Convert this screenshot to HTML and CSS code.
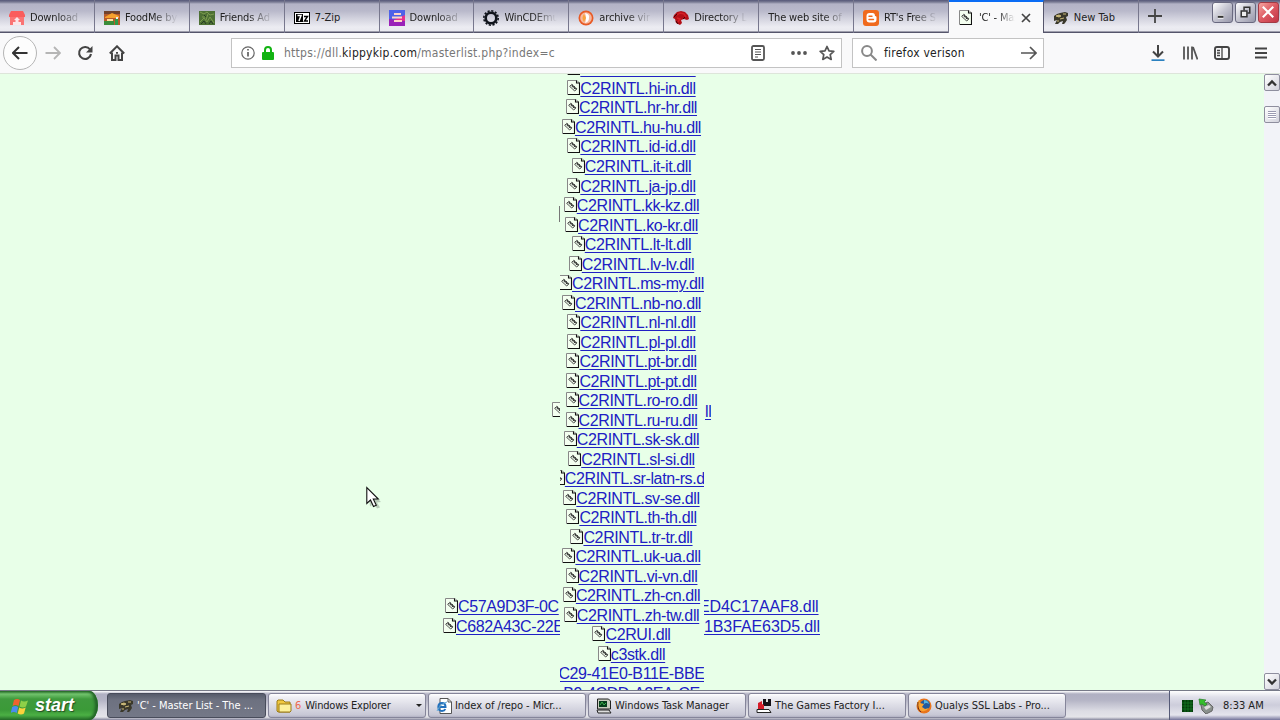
FILE: index.html
```
<!DOCTYPE html>
<html lang="en">

<head>
    <meta charset="UTF-8">
    <meta name="viewport" content="width=device-width, initial-scale=1.0">
    <title>'C' - Master List</title>
    <link rel="stylesheet" href="styles.css">
</head>

<body>
    <!-- shared icons -->
    <svg class="defs">
        <symbol id="file" viewBox="0 0 13 15">
            <path d="M.5.500h9.500l2.500 2.500v11.500H.5z" fill="#f4fff0" stroke="#888" stroke-width="1" />
            <path d="M9.500.500v2.500h3v11.500H1" fill="none" stroke="#111" stroke-width="1.100" />
            <path d="M2.800 6.500l2-2.200 5 4.400-2 2.400-5-4.600M4.500 5.800l4 3.600" fill="none" stroke="#222" stroke-width="1" stroke-dasharray="2 .6" />
            <path d="M4.500 4.500l5 5" stroke="#222" stroke-width=".8" />
        </symbol>
        <symbol id="turtle" viewBox="0 0 16 16">
            <path d="M1 6l3-2 3-1 5-1 3 1v3l-2 1 1 3-2 3-1 1H9l1-3-3 1-2 2H2l2-4-3 1z" fill="#3a382a" />
            <path d="M3 6l3-1 2 1-2 1zM10 4h3M7 9l4-1M4 11h2" fill="#d8c88a" stroke="#c9b878" stroke-width="1" />
        </symbol>
    </svg>

    <div class="tabs">
        <div class="tab">
            <svg class="fav" viewBox="0 0 16 16"><path d="M2 1h12l2 4v2H0V5z" fill="#fa5c5c" /><path d="M1 7h14v8H1z" fill="#fa7474" /><path d="M8 7l3 3H9.500v2h-3v-2H5zM4 15v-3h8v3" fill="#fbe5e8" /></svg>
            <span class="tab-title">Download</span>
        </div>
        <div class="tab">
            <svg class="fav" viewBox="0 0 16 16"><path d="M0 1h16v14H0z" fill="#b75b2b" /><path d="M0 1h16v3H0z" fill="#70422e" /><path d="M1 7l7-4 7 3v2H1z" fill="#f6a12d" /><path d="M0 11h10v4H0z" fill="#3a8c3a" /><path d="M3 9h6v2H3z" fill="#ffe0a0" /><path d="M11 9h3v6h-3z" fill="#2c9b49" /><path d="M12 7h2v2h-2z" fill="#eee" /></svg>
            <span class="tab-title">FoodMe by</span>
        </div>
        <div class="tab">
            <svg class="fav" viewBox="0 0 16 16"><path d="M0 1h16v14H0z" fill="#4d7034" /><path d="M1 2l4 2 3-2 3 3 4-1M1 12l4-4 3 4 3-5 4 6M3 7h3M9 4l-2 6" fill="none" stroke="#7c9b4f" stroke-width="1" /><path d="M2 14l3-3 2 3M10 14l2-3 2 3M5 5l2 2" stroke="#263b25" fill="none" /></svg>
            <span class="tab-title">Friends Ad</span>
        </div>
        <div class="tab">
            <svg class="fav" viewBox="0 0 16 16"><path d="M0 2h16v12H0z" fill="#000" /><path d="M1 3h14v10H1z" fill="#fff" /><path d="M2 4h7v8H2z" fill="#000" /><path d="M3.500 5.500h3.500l-2 5.500" fill="none" stroke="#fff" stroke-width="1.500" /><path d="M10 6.500h3.500l-3 4.500H14" fill="none" stroke="#000" stroke-width="1.400" /></svg>
            <span class="tab-title zip">7-Zip</span>
        </div>
        <div class="tab">
            <svg class="fav" viewBox="0 0 16 16"><rect width="16" height="16" y="0" rx="1" fill="#e8308c" /><path d="M0 0h16v5L0 12z" fill="#4e62e8" /><path d="M0 9l16 2v5H0z" fill="#9a21b8" /><path d="M5 4h7M3 7.500h10M5 11h8" stroke="#ffd5c9" stroke-width="1.800" /></svg>
            <span class="tab-title">Download</span>
        </div>
        <div class="tab">
            <svg class="fav" viewBox="0 0 16 16"><circle cx="8" cy="8" r="5.300" fill="none" stroke="#10141c" stroke-width="2.600" /><circle cx="8" cy="8" r="7.200" fill="none" stroke="#10141c" stroke-width="1.600" stroke-dasharray="2.200 1.570" /></svg>
            <span class="tab-title">WinCDEmu</span>
        </div>
        <div class="tab">
            <svg class="fav" viewBox="0 0 16 16"><circle cx="8" cy="8" r="7.500" fill="#e85a25" /><circle cx="8" cy="8" r="5.800" fill="#f6b9a0" /><path d="M7 3q5 1 4 5 0 4-4 5 2-5 0-10z" fill="#fff" /><path d="M6 4q-3 4 0 8l2-4z" fill="#f9a33d" /></svg>
            <span class="tab-title">archive vir</span>
        </div>
        <div class="tab">
            <svg class="fav" viewBox="0 0 16 16"><path d="M1 5l3-3 4-1 4 1 3 3 1 4-2 1-3-1-3 1 1 3-2 2-4-2-1-4-2-1z" fill="#b30f16" /><path d="M4 5l3-2 4 1 2 3M4 8l3 1-2 3" fill="none" stroke="#d51f25" stroke-width="1.500" /><path d="M1 7l3-3M3 11l2 3M10 9l2-2" stroke="#43070a" fill="none" /></svg>
            <span class="tab-title">Directory L</span>
        </div>
        <div class="tab bare">
            <span class="tab-title">The web site of</span>
        </div>
        <div class="tab">
            <svg class="fav" viewBox="0 0 16 16"><rect width="16" height="16" rx="3" fill="#f06a1d" /><path d="M6.500 3h3q2.500 0 2.500 3 1.500 0 1.500 1.200V9.500q0 3-3 3h-4q-3 0-3-3V6q0-3 3-3z" fill="#fff" /><path d="M6 6.200h3M6 9.500h4.500" stroke="#f06a1d" stroke-width="1.400" stroke-linecap="round" /></svg>
            <span class="tab-title">RT's Free S</span>
        </div>
        <div class="tab active">
            <svg class="fav page"><use href="#file" /></svg>
            <span class="tab-title">'C' - Mas</span>
            <svg class="close" viewBox="0 0 10 10"><path d="M1 1l8 8M9 1L1 9" stroke="#444" stroke-width="1.700" /></svg>
        </div>
        <div class="tab">
            <svg class="fav"><use href="#turtle" /></svg>
            <span class="tab-title new-tab">New Tab</span>
        </div>
        <div class="add"><svg viewBox="0 0 14 14"><path d="M7 0v14M0 7h14" stroke="#444" stroke-width="1.800" /></svg></div>
        <div class="window-btns">
            <button class="win"><svg viewBox="0 0 20 20"><path d="M5 14.500h6" stroke="#fff" stroke-width="4" /><path d="M5 14.500h6" stroke="#333" stroke-width="2.200" /></svg></button>
            <button class="win"><svg viewBox="0 0 20 20"><path d="M8.500 8V4.500h6v6H12" fill="none" stroke="#333" stroke-width="1.600" /><path d="M5.500 8.500h6v6h-6z" fill="#eee" stroke="#333" stroke-width="1.600" /></svg></button>
            <button class="win red"><svg viewBox="0 0 20 20"><path d="M4 4l11 11M15 4L4 15" stroke="#fff" stroke-width="2.200" /></svg></button>
        </div>
    </div>

    <div class="toolbar">
        <div class="back"><svg viewBox="0 0 16 16"><path d="M15.500 8H1.500M7 2L1 8l6 6" fill="none" stroke="#333" stroke-width="2" /></svg></div>
        <svg class="nav" viewBox="0 0 16 16"><path d="M.5 8h14M9 2l6 6-6 6" fill="none" stroke="#b5b5b5" stroke-width="1.800" /></svg>
        <svg class="nav" viewBox="0 0 16 16"><path d="M13 4.500A6 6 0 1 0 14 9" fill="none" stroke="#444" stroke-width="2.100" /><path d="M15.500 1v6.500H9z" fill="#444" /></svg>
        <svg class="nav" viewBox="0 0 16 16"><path d="M.8 8.500L8 1.300l7.200 7.200" fill="none" stroke="#444" stroke-width="2" /><path d="M3 7.500V15h3.500v-4.500h3V15H13V7.500" fill="none" stroke="#444" stroke-width="2" /><path d="M7 7h2v1.800H7z" fill="#444" /></svg>
        <div class="url-bar">
            <svg class="info" viewBox="0 0 14 14"><circle cx="7" cy="7" r="6.200" fill="none" stroke="#666" stroke-width="1.200" /><path d="M7 6v4.500M7 3v1.600" stroke="#555" stroke-width="1.600" /></svg>
            <svg class="lock" viewBox="0 0 12 14"><path d="M3 7V4a3 3 0 0 1 6 0v3" fill="none" stroke="#12b312" stroke-width="2" /><rect y="6" width="12" height="8" rx="1" fill="#12b312" /></svg>
            <span class="url">https://dll.<b>kippykip.com</b>/masterlist.php?index=c</span>
            <svg class="reader" viewBox="0 0 14 16"><rect x="1" y="1" width="12" height="14" rx="1.500" fill="none" stroke="#555" stroke-width="1.800" /><path d="M4 4.500h6M4 7h6M4 9.500h6M4 12h3" stroke="#555" /></svg>
            <svg class="dots" viewBox="0 0 16 4"><circle cx="2" cy="2" r="1.900" fill="#555" /><circle cx="8" cy="2" r="1.900" fill="#555" /><circle cx="14" cy="2" r="1.900" fill="#555" /></svg>
            <svg class="star" viewBox="0 0 16 16"><path d="M8 1.500l2 4.400 4.800.5-3.600 3.200 1 4.800L8 12l-4.200 2.400 1-4.800L1.200 6.400 6 5.900z" fill="none" stroke="#555" stroke-width="1.700" stroke-linejoin="round" /></svg>
        </div>
        <div class="search">
            <svg class="glass" viewBox="0 0 16 16"><circle cx="6" cy="6" r="4.900" fill="none" stroke="#888" stroke-width="2" /><path d="M9.500 9.500l6 6" stroke="#888" stroke-width="2" /></svg>
            <span>firefox verison</span>
            <svg class="go" viewBox="0 0 16 14"><path d="M0 7h15M9 1l6 6-6 6" fill="none" stroke="#555" stroke-width="1.700" /></svg>
        </div>
        <div class="tools">
            <svg viewBox="0 0 16 16"><path d="M8 0v11M3 6.500l5 5 5-5" fill="none" stroke="#444" stroke-width="2" /><path d="M1.500 15.200h13" stroke="#2c82c0" stroke-width="1.800" /></svg>
            <svg viewBox="0 0 16 16"><path d="M2 1.500v13M6 1.500v13M10 1.500v13M11 2l4.500 12.500" fill="none" stroke="#555" stroke-width="1.800" /></svg>
            <svg viewBox="0 0 16 16"><rect x="1" y="2" width="14" height="12" rx="2" fill="none" stroke="#444" stroke-width="1.900" /><path d="M8 2v12M3 5.500h3M3 8h3M3 10.500h3" stroke="#444" stroke-width="1.300" /></svg>
            <svg class="menu" viewBox="0 0 14 14"><path d="M1 2.500h12M1 7h12M1 11.500h12" stroke="#444" stroke-width="1.900" /></svg>
        </div>
    </div>

    <div class="page-area">
        <div class="content">
            <!-- rows further down the list that only partly repainted -->
            <div class="stale sliver"></div>
            <div class="stale cut"><svg class="file"><use href="#file" /></svg></div>
            <a class="stale cut-end">ll</a>
            <div class="stale left-rows">
                <div><svg class="file"><use href="#file" /></svg><a>C57A9D3F-0C</a></div>
                <div class="wide"><svg class="file"><use href="#file" /></svg><a>C682A43C-22E</a></div>
            </div>
            <div class="stale right-rows">
                <div><a class="shift">ED4C17AAF8.dll</a></div>
                <div><a>1B3FAE63D5.dll</a></div>
            </div>

            <div class="list"></div>
        </div>
        <div class="scrollbar">
            <div class="sb-btn"><svg viewBox="0 0 10 8"><path d="M1 6.500l4-4 4 4" fill="none" stroke="#333" stroke-width="2.300" /></svg></div>
            <div class="thumb"></div>
            <div class="sb-btn down"><svg viewBox="0 0 10 8"><path d="M1 1.500l4 4 4-4" fill="none" stroke="#333" stroke-width="2.300" /></svg></div>
        </div>
        <svg class="cursor" viewBox="0 0 14 23"><path d="M2 3l13 13-4 .5 3 5-3 1-3-5-4 3z" fill="#0003" /><path d="M.8 1.500v16l3.700-3.500 3 6.500 2.800-1.200-3-6.300h5z" fill="#fff" stroke="#111" stroke-width="1.100" /></svg>
    </div>

    <div class="taskbar">
        <div class="start">
            <svg viewBox="0 0 18 18"><path d="M3 3q3-2 6 0L7.500 9q-3-2-6 0z" fill="#f0622d" /><path d="M10 3.500q3 2 7 0L15 9.500q-3 2-6.500 0z" fill="#8ed048" /><path d="M1.200 10q3-2 6 0L5.700 16q-3-2-6 0z" fill="#4a8df0" /><path d="M8.200 10.500q3 2 6.500 0L13 16.500q-3 2-6.300 0z" fill="#fbd23c" /></svg>
            <span>start</span>
        </div>
        <div class="task current"><svg><use href="#turtle" /></svg><span>'C' - Master List - The ...</span></div>
        <div class="task">
            <svg viewBox="0 0 16 16"><path d="M1 3l1-1h5l2 2h5v10H2L1 13z" fill="#f1c840" stroke="#9a7b18" /><path d="M3 6h12v7l-1 1H3z" fill="#fdf09a" stroke="#9a7b18" /></svg>
            <em>6</em><span class="grouped">Windows Explorer</span><i class="arrow"></i>
        </div>
        <div class="task">
            <svg viewBox="0 0 16 16"><path d="M4 .5h8l3.500 3.500v11.500H4z" fill="#fff" stroke="#555" /><path d="M12 .5V4h3.500" fill="none" stroke="#555" /><path d="M2.500 9h7q0-4-3.500-4t-3.700 4q.3 4 3.700 4 2.500 0 3.300-2" fill="none" stroke="#2371bd" stroke-width="2" /><path d="M1 13Q4 6 11 4" fill="none" stroke="#63acd9" /></svg>
            <span>Index of /repo - Micr...</span>
        </div>
        <div class="task">
            <svg viewBox="0 0 16 16"><path d="M1.500 1h11l2 2v8h-13z" fill="#c9cdbf" stroke="#222" /><path d="M3 3h8v6H3z" fill="#063e1b" /><path d="M4 7l2-3 2 3 2-2" fill="none" stroke="#3eb34e" /><path d="M1 12h12l2 3H2z" fill="#ddd" stroke="#222" /></svg>
            <span>Windows Task Manager</span>
        </div>
        <div class="task">
            <svg viewBox="0 0 16 16"><path d="M7 1h8v7H7z" fill="#141018" /><path d="M10 1h2v3h-2z" fill="#ddd" /><path d="M2 11V5l4-2v3l2 1v4z" fill="#d51c2a" /><path d="M1 11.500h12l2 3H1z" fill="#fff" stroke="#222" /></svg>
            <span>The Games Factory I...</span>
        </div>
        <div class="task">
            <svg viewBox="0 0 16 16"><circle cx="8" cy="8" r="7.500" fill="#e8741c" /><circle cx="9" cy="7" r="5" fill="#235a9c" /><path d="M8 2q4 0 5 4-3-2-5 0z" fill="#55b4e0" /><path d="M1 5l2-3 1 3 4 1-2 3 3 2 4-1q-3 4-7 3-5-1-5-8z" fill="#f9a431" /><path d="M2 4q-1 7 3 10" stroke="#6f2c12" fill="none" /></svg>
            <span>Qualys SSL Labs - Pro...</span>
        </div>
        <div class="tray">
            <svg class="cpu" viewBox="0 0 11 12"><path d="M0 0h11v12H0z" fill="#033d0b" /><path d="M0 3h11M0 6h11M0 9h11M3 0v12M6 0v12M9 0v12" stroke="#188026" stroke-width=".7" /></svg>
            <svg class="usb" viewBox="0 0 16 16"><path d="M3 7l7-3 5 5-1 4-6 3-4-4z" fill="#8a918d" stroke="#666" /><path d="M6 9l5-2 2 2-5 3z" fill="#ddd" /><path d="M1 1l7 1-2 2 3 2-2 2-3-2-2 1z" fill="#35bf2b" stroke="#257c25" stroke-width=".7" /></svg>
            <span>8:33 AM</span>
        </div>
    </div>

    <script src="script.js"></script>
</body>

</html>
```

FILE: styles.css
```
* {
    margin: 0;
    padding: 0;
    box-sizing: border-box;
}

body {
    width: 1280px;
    height: 720px;
    overflow: hidden;
    display: flex;
    flex-direction: column;
    font-family: "DejaVu Sans Condensed", "DejaVu Sans", sans-serif;
    font-stretch: condensed;
    font-size: 11px;
    color: #222;
}

svg {
    flex: none;
    display: block;
}

.defs {
    position: absolute;
    width: 0;
    height: 0;
}

/* tab strip */
.tabs {
    height: 33px;
    flex: none;
    display: flex;
    background: linear-gradient(#555778 0, #777992 2px, #b3b3c6 4px, #b9b9cb 11px, #d1d1dd 18px, #ececf2 27px, #e9e9ef 31px, #55556b 32px);
}

.tab {
    width: 94.9px;
    flex: none;
    display: flex;
    align-items: center;
    padding: 2px 0 0 9px;
    border-right: 1px solid #77778d;
}

.fav {
    width: 16px;
    height: 16px;
    margin-right: 5px;
}

.page {
    width: 13px;
    height: 15px;
    margin: 0 7px 0 1px;
}

.tab-title {
    width: 62px;
    white-space: nowrap;
    line-height: 18px;
    letter-spacing: -.15px;
    -webkit-mask-image: linear-gradient(to right, #000 28px, transparent 53px);
    mask-image: linear-gradient(to right, #000 28px, transparent 53px);
}

.bare .tab-title {
    width: 84px;
    -webkit-mask-image: linear-gradient(to right, #000 55px, transparent 78px);
    mask-image: linear-gradient(to right, #000 55px, transparent 78px);
}

.tab .zip,
.tab .new-tab {
    letter-spacing: 0;
    -webkit-mask-image: none;
    mask-image: none;
}

.active {
    background: #f9f9fa;
    border-top: 2px solid #0a6cf5;
    padding-top: 0;
    border-right-color: #55556b;
}

.active .tab-title {
    width: 41px;
    letter-spacing: -.2px;
    -webkit-mask-image: linear-gradient(to right, #000 18px, transparent 36px);
    mask-image: linear-gradient(to right, #000 18px, transparent 36px);
}

.close {
    width: 10px;
    height: 10px;
    margin-left: 1px;
}

.add svg {
    width: 14px;
    height: 14px;
    margin: 9px 0 0 9px;
}

.window-btns {
    display: flex;
    gap: 2px;
    margin: 2px 1px 0 auto;
}

.win {
    width: 21px;
    height: 21px;
    border: 1px solid #68687f;
    border-radius: 3px;
    background: linear-gradient(135deg, #fff, #c4c4d0 50%, #9797aa);
}

.red {
    border-color: #a23a45;
    background: linear-gradient(135deg, #f7a5a0, #dc5962 50%, #c23546);
}

/* navigation */
.toolbar {
    height: 41px;
    flex: none;
    display: flex;
    align-items: center;
    padding-left: 3px;
    background: #f9f9fa;
    border-bottom: 1px solid #dde5da;
}

.back {
    width: 34px;
    height: 34px;
    display: flex;
    align-items: center;
    justify-content: center;
    border: 1px solid #b5b5b5;
    border-radius: 50%;
    background: #fdfdfd;
    margin-right: 8px;
}

.back svg,
.nav {
    width: 16px;
    height: 16px;
}

.nav {
    margin-right: 16px;
}

.url-bar,
.search {
    height: 30px;
    display: flex;
    align-items: center;
    background: #fff;
    border: 1px solid #c3c3c3;
}

.url-bar {
    width: 611px;
    margin-left: 90px;
    padding-left: 9px;
}

.info {
    width: 14px;
    height: 14px;
    margin-right: 7px;
}

.lock {
    width: 12px;
    height: 14px;
    margin-right: 10px;
}

.url {
    width: 467px;
    font-size: 12px;
    letter-spacing: .26px;
    color: #777;
}

.url b {
    font-weight: normal;
    color: #222;
}

.reader {
    width: 14px;
    height: 16px;
}

.dots {
    width: 16px;
    height: 4px;
    margin-left: 26px;
}

.star {
    width: 16px;
    height: 16px;
    margin-left: 12px;
}

.search {
    width: 192px;
    margin-left: 10px;
    padding-left: 8px;
    font-size: 12px;
}

.search span {
    width: 137px;
    letter-spacing: .25px;
}

.glass {
    width: 16px;
    height: 16px;
    margin-right: 7px;
}

.go {
    width: 16px;
    height: 14px;
}

.tools {
    display: flex;
    align-items: center;
    gap: 16px;
    margin-left: 106px;
}

.tools svg {
    width: 16px;
    height: 16px;
}

.tools .menu {
    width: 14px;
    height: 14px;
    margin-left: 8px;
}

/* page */
.page-area {
    height: 616px;
    flex: none;
    display: flex;
    position: relative;
    overflow: hidden;
    background: #e8ffe8;
}

.content {
    flex: 1;
    position: relative;
    overflow: hidden;
    padding-left: 560px;
    font-family: "Liberation Sans", Arial, sans-serif;
    font-size: 16px;
    letter-spacing: -.38px;
}

.content a {
    color: #2020c4;
    text-decoration: underline;
    text-decoration-thickness: 1px;
    text-underline-offset: 2px;
}

.list {
    width: 144px;
    overflow: hidden;
    margin-top: -14.6px;
}

.row,
.left-rows div,
.right-rows div {
    height: 19.52px;
    line-height: 20px;
    display: flex;
    justify-content: center;
    white-space: nowrap;
}

.row {
    padding-right: 1px;
}

.file {
    width: 13px;
    height: 15px;
    margin-top: 1px;
}

.stale {
    position: absolute;
    overflow: hidden;
}

.sliver {
    left: 559px;
    top: 132px;
    width: 1px;
    height: 16px;
    background: #777;
}

.cut {
    left: 552px;
    top: 327px;
    width: 8px;
    height: 18px;
}

.cut-end {
    left: 705px;
    top: 328px;
    line-height: 20px;
}

.left-rows {
    left: 443px;
    top: 523px;
    width: 117px;
}

.left-rows div {
    justify-content: flex-start;
    padding-left: 2px;
}

.left-rows .wide {
    padding-left: 0;
}

.right-rows {
    left: 704px;
    top: 523px;
    letter-spacing: -.1px;
}

.right-rows div {
    justify-content: flex-start;
}

.right-rows .shift {
    margin-left: -5px;
}

.scrollbar {
    width: 16px;
    display: flex;
    flex-direction: column;
    background: #f2f3f8;
}

.sb-btn,
.thumb {
    width: 16px;
    height: 17px;
    flex: none;
    border: 1px solid #8e8e9e;
    border-radius: 2px;
    background: linear-gradient(135deg, #fff, #d2d2dc);
}

.sb-btn svg {
    width: 10px;
    height: 8px;
    margin: 4px 0 0 2px;
}

.thumb {
    margin-top: 15px;
    padding: 4px 3px;
}

.thumb::before {
    content: "";
    display: block;
    height: 8px;
    background: repeating-linear-gradient(#9a9ab0 0 1px, #fff 1px 2px);
}

.down {
    margin-top: auto;
}

.cursor {
    position: absolute;
    left: 366px;
    top: 412px;
    width: 14px;
    height: 23px;
    overflow: visible;
}

/* taskbar */
.taskbar {
    height: 30px;
    flex: none;
    display: flex;
    border-top: 1px solid #777a88;
    background: linear-gradient(#fff 0, #b0b0c2 3px, #b4b4c5 9px, #dcdce4 20px, #e4e4e9 26px, #85859c 29px);
}

.start {
    width: 98px;
    display: flex;
    align-items: center;
    padding-left: 11px;
    border-radius: 0 9px 9px 0 / 0 15px 15px 0;
    background: linear-gradient(#276e28 0, #72c46d 3px, #3f9a3d 8px, #3b9a38 19px, #4bb044 24px, #26702a 29px);
    box-shadow: inset -3px 0 3px #226226;
}

.start svg {
    width: 18px;
    height: 18px;
    margin-right: 6px;
}

.start span {
    font: italic bold 18px "Liberation Sans", sans-serif;
    color: #fff;
    text-shadow: 1px 1px 1px #234f23;
    padding-bottom: 1px;
}

.task {
    width: 158px;
    height: 25px;
    margin: 2px 2px 0 0;
    flex: none;
    display: flex;
    align-items: center;
    padding-left: 7px;
    border: 1px solid #85859a;
    border-radius: 3px;
    background: linear-gradient(#fff 0, #f0f0f5 3px, #d9d9e3 13px, #c7c7d5 21px, #b1b1c3);
    white-space: nowrap;
    letter-spacing: -.05px;
}

.task svg {
    width: 16px;
    height: 16px;
    margin-right: 3px;
}

.task .grouped {
    letter-spacing: -.2px;
}

.current {
    width: 159px;
    margin-left: 9px;
    padding-left: 10px;
    background: linear-gradient(#565b6b, #6d7180 6px, #747887);
    border-color: #484c5b;
    color: #fff;
}

.task em {
    color: #ee6a4d;
    font-style: normal;
    margin-right: 4px;
}

.arrow {
    border: 3px solid transparent;
    border-top-color: #222;
    border-bottom: 0;
    margin: 0 3px 0 auto;
}

.tray {
    width: 111px;
    margin-left: auto;
    display: flex;
    align-items: center;
    border-left: 1px solid #555a77;
    padding-left: 12px;
    background: linear-gradient(#fff, #e0e0ea 6px, #cdcddb 14px, #e5e5ed 24px, #73739a 29px);
}

.cpu {
    width: 11px;
    height: 12px;
    margin-right: 5px;
}

.usb {
    width: 16px;
    height: 16px;
    margin-right: 9px;
}
```

FILE: script.js
```
const list = document.querySelector('.list')
const langs = ['he-il', 'hi-in', 'hr-hr', 'hu-hu', 'id-id', 'it-it', 'ja-jp', 'kk-kz', 'ko-kr', 'lt-lt',
    'lv-lv', 'ms-my', 'nb-no', 'nl-nl', 'pl-pl', 'pt-br', 'pt-pt', 'ro-ro', 'ru-ru', 'sk-sk', 'sl-si',
    'sr-latn-rs', 'sv-se', 'th-th', 'tr-tr', 'uk-ua', 'vi-vn', 'zh-cn', 'zh-tw']

function addRow(name, icon) {
    const row = document.createElement('div')
    row.className = 'row'
    if (icon) {
        row.innerHTML = '<svg class="file"><use href="#file" /></svg>'
    }
    row.innerHTML += `<a>${name}</a>`
    list.appendChild(row)
}

langs.forEach((lang) => addRow(`C2RINTL.${lang}.dll`, true))
addRow('C2RUI.dll', true)
addRow('c3stk.dll', true)
// long names run past both edges of the column
addRow('C29-41E0-B11E-BBE', false)
addRow('B9-4CDD-A2EA-CE', false)
```
